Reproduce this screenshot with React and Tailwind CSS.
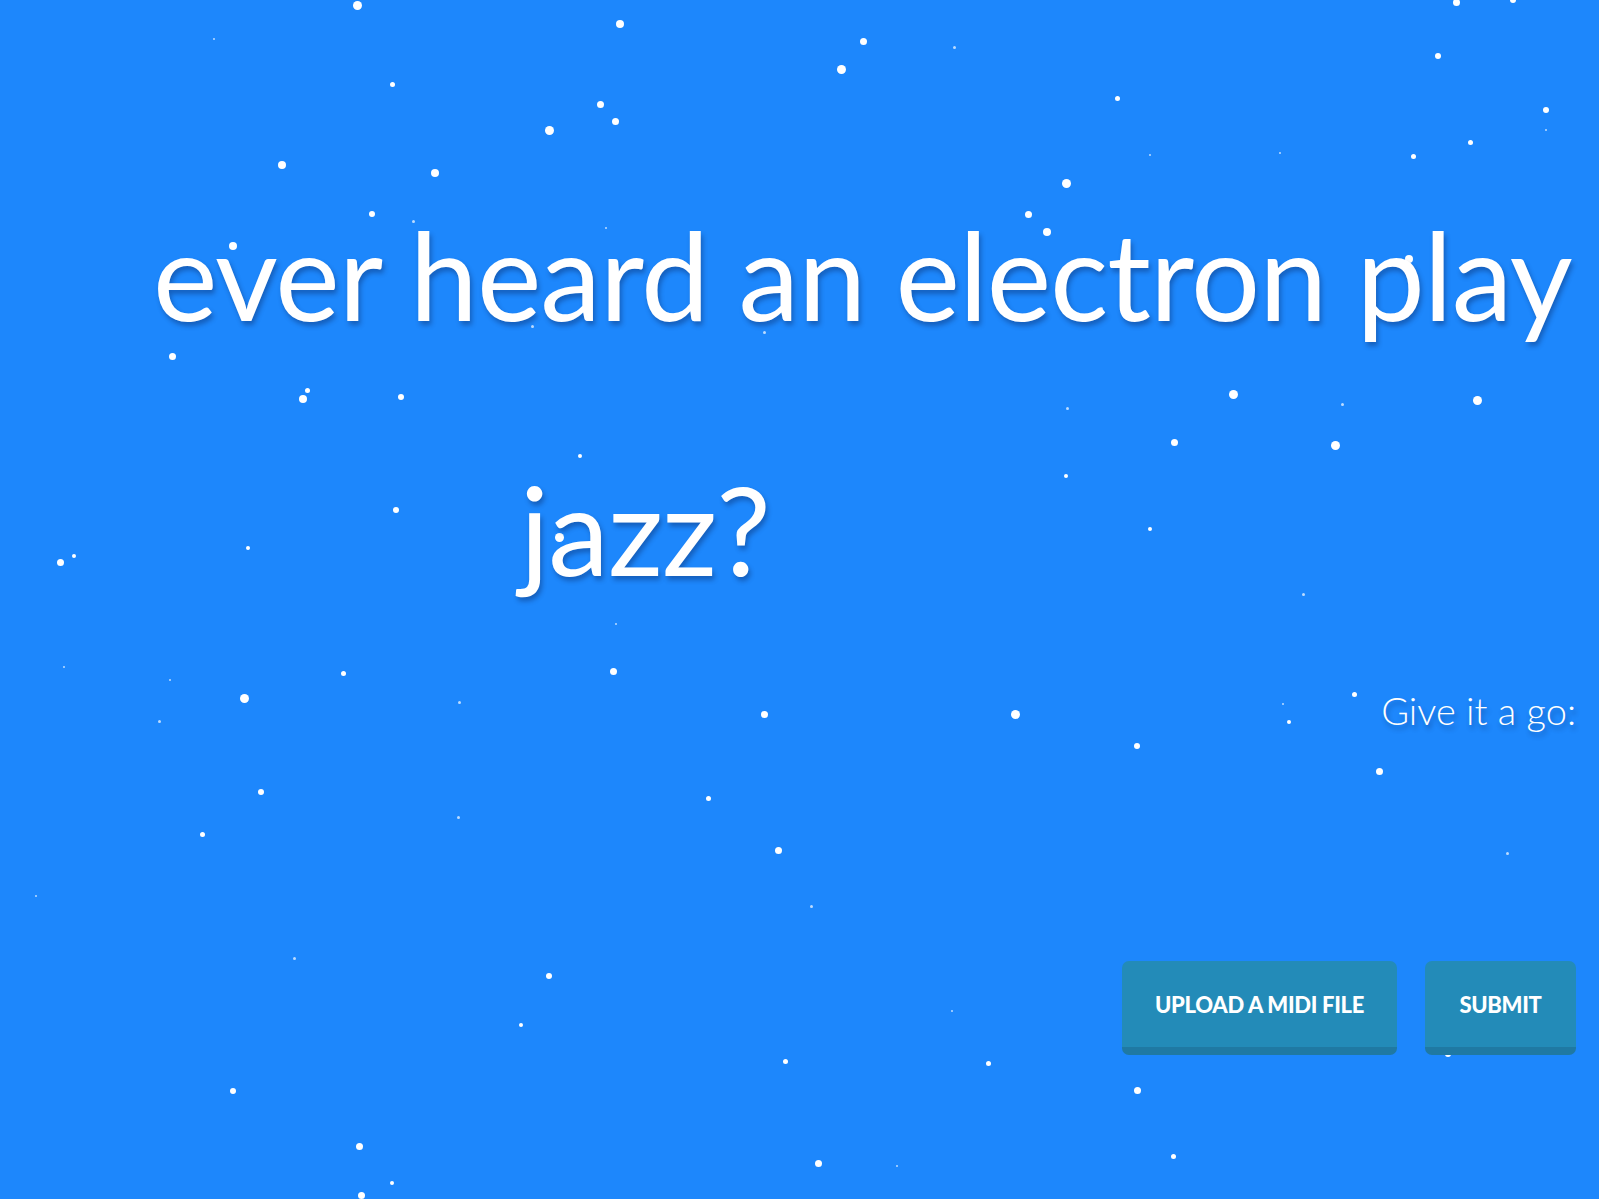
import React from 'react';

// snowflakes: [x, y, size] in page pixels
const FLAKES = [
  [357, 5, 9], [620, 24, 8], [863, 41, 7], [841, 69, 9], [392, 84, 5], [600, 104, 7],
  [615, 121, 7], [549, 130, 9], [282, 165, 8], [435, 173, 8], [1066, 183, 9], [372, 214, 6],
  [1028, 214, 7], [1047, 232, 8], [233, 246, 8], [1409, 259, 8], [172, 356, 7], [303, 399, 8],
  [307, 390, 5], [401, 397, 6], [1233, 394, 9], [1477, 400, 9], [1174, 442, 7], [1335, 445, 9],
  [396, 510, 6], [60, 562, 7], [74, 556, 4], [248, 548, 4], [1150, 529, 4], [559, 537, 9],
  [613, 671, 7], [343, 673, 5], [244, 698, 9], [764, 714, 7], [1015, 714, 9], [1137, 746, 6],
  [1379, 771, 7], [261, 792, 6], [708, 798, 5], [202, 834, 5], [778, 850, 7], [549, 976, 6],
  [521, 1025, 4], [785, 1061, 5], [988, 1063, 5], [1137, 1090, 7], [233, 1091, 6], [359, 1146, 7],
  [818, 1163, 7], [1173, 1156, 5], [392, 1183, 4], [361, 1195, 7], [1448, 1054, 6], [1438, 56, 6],
  [1470, 142, 5], [1413, 156, 5], [1546, 110, 6], [1117, 98, 5], [1456, 2, 7], [1513, 0, 6],
  [214, 39, 2], [954, 47, 3], [1280, 153, 2], [1150, 155, 2], [413, 221, 3], [606, 228, 2],
  [532, 326, 3], [764, 332, 3], [1101, 308, 3], [1342, 404, 3], [1067, 408, 3], [1066, 476, 4],
  [580, 456, 4], [1303, 594, 3], [64, 667, 2], [616, 624, 2], [170, 680, 2], [459, 702, 3],
  [159, 721, 3], [1283, 704, 2], [1289, 722, 4], [1354, 694, 5], [458, 817, 3], [811, 906, 3],
  [294, 958, 3], [1507, 853, 3], [36, 896, 2], [952, 1011, 2], [897, 1166, 2], [1546, 130, 2],
];

export default function App() {
  const shadow = '[text-shadow:2px_4px_5px_rgba(0,0,40,0.3)]';

  return (
    <div className="relative min-h-screen h-[1199px] overflow-hidden bg-[#1d87fc] font-['Lato','Open_Sans',sans-serif] text-white">
      {/* Falling snow */}
      {FLAKES.map(([x, y, s], i) => (
        <div
          key={i}
          className="absolute rounded-full bg-white"
          style={{ left: x - s / 2, top: y - s / 2, width: s, height: s, opacity: s < 4 ? 0.7 : 1 }}
        />
      ))}

      <div className="relative flex flex-col pr-[23px]">
        {/* Heading */}
        <h1 className={`pl-[153px] pt-[194px] text-[122px] font-normal tracking-[-1px] whitespace-nowrap ${shadow}`}>
          <span className="block leading-[160px]">ever heard an electron play</span>
          <span className="block pl-[367px] pt-[95px] leading-[160px]">jazz?</span>
        </h1>

        {/* Call to action */}
        <p className={`mt-[77px] self-end text-[38px] font-light leading-[48px] ${shadow}`}>Give it a go:</p>

        <div className="mt-[227px] flex justify-end gap-[28px]">
          <button className="h-[94px] w-[275px] rounded-[7px] border-b-[8px] border-[#1f79a3] bg-[#238bb8] text-[22px] font-black uppercase tracking-[-0.3px]">
            Upload a MIDI file
          </button>
          <button className="h-[94px] w-[151px] rounded-[7px] border-b-[8px] border-[#1f79a3] bg-[#238bb8] text-[22px] font-black uppercase tracking-[-0.3px]">
            Submit
          </button>
        </div>
      </div>
    </div>
  );
}
